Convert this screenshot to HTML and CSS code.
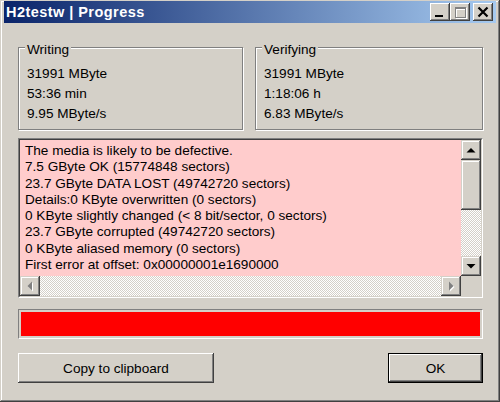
FILE: index.html
```html
<!DOCTYPE html>
<html>
<head>
<meta charset="utf-8">
<title>H2testw | Progress</title>
<link rel="stylesheet" href="styles.css">
</head>
<body>
<div class="window">
  <div class="titlebar">
    <span class="title">H2testw | Progress</span>
    <div class="title-buttons">
      <div class="tbtn">
        <svg width="20" height="18" viewBox="0 0 20 18"><rect x="5" y="12" width="8" height="2" fill="#000"/></svg>
      </div>
      <div class="tbtn">
        <svg width="20" height="18" viewBox="0 0 20 18">
          <path d="M6 5h11v11h-11z M7 7v8h9v-8z" fill="#fff" fill-rule="evenodd"/>
          <path d="M5 4h11v11h-11z M6 6v8h9v-8z" fill="#808080" fill-rule="evenodd"/>
        </svg>
      </div>
      <div class="tbtn tbtn-close">
        <svg width="20" height="18" viewBox="0 0 20 18"><path d="M5.5 4.5 L14.5 13.5 M14.5 4.5 L5.5 13.5" stroke="#000" stroke-width="2.2" fill="none"/></svg>
      </div>
    </div>
  </div>
  <div class="content">
    <div class="groups">
      <div class="group">
        <span class="group-label">Writing</span>
        <div class="group-line">31991 MByte</div>
        <div class="group-line">53:36 min</div>
        <div class="group-line">9.95 MByte/s</div>
      </div>
      <div class="group">
        <span class="group-label">Verifying</span>
        <div class="group-line">31991 MByte</div>
        <div class="group-line">1:18:06 h</div>
        <div class="group-line">6.83 MByte/s</div>
      </div>
    </div>
    <div class="textbox">
      <div class="textbox-inner">
        <div class="log">
          <div>The media is likely to be defective.</div>
          <div>7.5 GByte OK (15774848 sectors)</div>
          <div>23.7 GByte DATA LOST (49742720 sectors)</div>
          <div>Details:0 KByte overwritten (0 sectors)</div>
          <div>0 KByte slightly changed (&lt; 8 bit/sector, 0 sectors)</div>
          <div>23.7 GByte corrupted (49742720 sectors)</div>
          <div>0 KByte aliased memory (0 sectors)</div>
          <div>First error at offset: 0x00000001e1690000</div>
        </div>
        <div class="vscroll">
          <div class="sbtn">
            <svg width="20" height="20" viewBox="0 0 20 20"><polygon points="5.5,12.5 14.5,12.5 10,8" fill="#000"/></svg>
          </div>
          <div class="sbtn thumb"></div>
          <div class="track"></div>
          <div class="sbtn">
            <svg width="20" height="20" viewBox="0 0 20 20"><polygon points="5.5,8 14.5,8 10,12.5" fill="#000"/></svg>
          </div>
        </div>
        <div class="hscroll">
          <div class="sbtn">
            <svg width="20" height="20" viewBox="0 0 20 20"><polygon points="13,6.5 13,15.5 8.5,11" fill="#fff"/><polygon points="12,5.5 12,14.5 7.5,10" fill="#808080"/></svg>
          </div>
          <div class="track"></div>
          <div class="sbtn">
            <svg width="20" height="20" viewBox="0 0 20 20"><polygon points="9,6.5 9,15.5 13.5,11" fill="#fff"/><polygon points="8,5.5 8,14.5 12.5,10" fill="#808080"/></svg>
          </div>
        </div>
        <div class="corner"></div>
      </div>
    </div>
    <div class="progress"><div class="progress-fill"></div></div>
    <div class="actions">
      <div class="btn btn-copy">Copy to clipboard</div>
      <div class="btn-default"><div class="btn btn-ok">OK</div></div>
    </div>
  </div>
</div>
</body>
</html>
```
FILE: styles.css
```css
html, body {
  margin: 0;
  padding: 0;
}
body {
  width: 500px;
  height: 402px;
  overflow: hidden;
  background: #d4d0c8;
  font-family: "Liberation Sans", Arial, sans-serif;
  color: #000;
}
.window {
  box-sizing: border-box;
  width: 500px;
  height: 402px;
  padding: 1px 4px 4px 4px;
  background: #d4d0c8;
  box-shadow: inset -1px -1px #404040, inset 1px 1px #d4d0c8, inset -2px -2px #808080, inset 2px 2px #fff;
  display: flex;
  flex-direction: column;
}
.titlebar {
  height: 22px;
  display: flex;
  align-items: center;
  justify-content: space-between;
  padding: 0 3px 0 2px;
  background: linear-gradient(to right, #0a246a, #a6caf0);
}
.title {
  color: #fff;
  font-weight: bold;
  font-size: 14.5px;
  letter-spacing: 0.45px;
  white-space: nowrap;
}
.title-buttons {
  display: flex;
}
.tbtn {
  width: 20px;
  height: 18px;
  background: #d4d0c8;
  box-shadow: inset -1px -1px #404040, inset 1px 1px #fff, inset -2px -2px #808080, inset 2px 2px #d4d0c8;
}
.tbtn svg {
  display: block;
}
.tbtn-close {
  margin-left: 3px;
}
.content {
  padding: 24px 13px 0 14px;
  display: flex;
  flex-direction: column;
  font-size: 13.6px;
}
.groups {
  display: grid;
  grid-template-columns: 225px 1fr;
  column-gap: 12px;
}
.group {
  border: 1px solid #808080;
  box-shadow: inset 1px 1px #fff, 1px 1px #fff;
  padding: 0 0 5px 8px;
  display: flex;
  flex-direction: column;
  align-items: flex-start;
}
.group-label {
  margin: -6px 0 6px -2px;
  padding: 0 2px;
  line-height: 16px;
  background: #d4d0c8;
}
.group-line {
  line-height: 20px;
  white-space: nowrap;
}
.textbox {
  margin-top: 8px;
  border: 1px solid;
  border-color: #808080 #fff #fff #808080;
}
.textbox-inner {
  border: 1px solid;
  border-color: #404040 #d4d0c8 #d4d0c8 #404040;
  display: grid;
  grid-template-columns: 1fr 20px;
  grid-template-rows: 136px 20px;
}
.log {
  background: #ffcccc;
  padding: 3px 0 0 5px;
  line-height: 16.3px;
  white-space: nowrap;
  overflow: hidden;
}
.vscroll {
  display: flex;
  flex-direction: column;
}
.hscroll {
  display: flex;
}
.track {
  flex: 1;
  background: repeating-conic-gradient(#ffffff 0 25%, #d4d0c8 0 50%) 0 0 / 2px 2px;
}
.sbtn {
  flex: none;
  width: 20px;
  height: 20px;
  background: #d4d0c8;
  box-shadow: inset -1px -1px #404040, inset 1px 1px #d4d0c8, inset -2px -2px #808080, inset 2px 2px #fff;
}
.sbtn svg {
  display: block;
}
.thumb {
  height: 50px;
}
.corner {
  background: #d4d0c8;
}
.progress {
  margin-top: 11px;
  height: 30px;
  box-sizing: border-box;
  border: 1px solid;
  border-color: #808080 #fff #fff #808080;
  padding: 2px;
}
.progress-fill {
  height: 100%;
  background: #ff0000;
}
.actions {
  margin-top: 14px;
  display: flex;
  justify-content: space-between;
}
.btn {
  box-sizing: border-box;
  height: 30px;
  display: flex;
  align-items: center;
  justify-content: center;
  background: #d4d0c8;
  box-shadow: inset -1px -1px #404040, inset 1px 1px #fff, inset -2px -2px #808080, inset 2px 2px #d4d0c8;
  white-space: nowrap;
}
.btn-copy {
  width: 196px;
}
.btn-default {
  border: 1px solid #000;
  width: 95px;
  height: 30px;
  box-sizing: border-box;
}
.btn-ok {
  height: 28px;
}
```
